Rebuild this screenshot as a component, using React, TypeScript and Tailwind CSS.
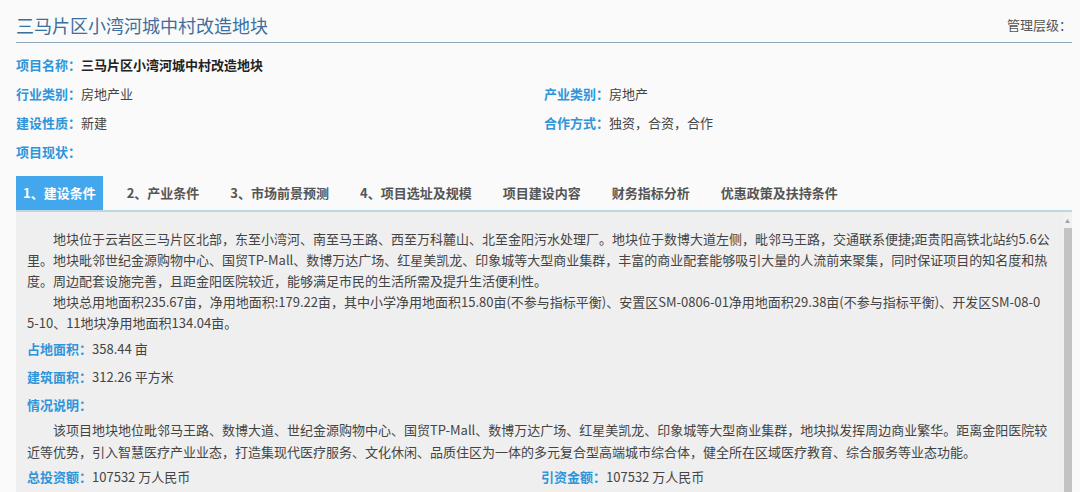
import React from 'react';

const font = { fontFamily: '"Noto Sans CJK SC", "Noto Sans", sans-serif' };

const tabs = [
  '1、建设条件',
  '2、产业条件',
  '3、市场前景预测',
  '4、项目选址及规模',
  '项目建设内容',
  '财务指标分析',
  '优惠政策及扶持条件',
];

const para1 = [
  '　　地块位于云岩区三马片区北部，东至小湾河、南至马王路、西至万科麓山、北至金阳污水处理厂。地块位于数博大道左侧，毗邻马王路，交通联系便捷;距贵阳高铁北站约5.6公',
  '里。地块毗邻世纪金源购物中心、国贸TP-Mall、数博万达广场、红星美凯龙、印象城等大型商业集群，丰富的商业配套能够吸引大量的人流前来聚集，同时保证项目的知名度和热',
  '度。周边配套设施完善，且距金阳医院较近，能够满足市民的生活所需及提升生活便利性。',
  '　　地块总用地面积235.67亩，净用地面积:179.22亩，其中小学净用地面积15.80亩(不参与指标平衡)、安置区SM-0806-01净用地面积29.38亩(不参与指标平衡)、开发区SM-08-0',
  '5-10、11地块净用地面积134.04亩。',
];

const para2 = [
  '　　该项目地块地位毗邻马王路、数博大道、世纪金源购物中心、国贸TP-Mall、数博万达广场、红星美凯龙、印象城等大型商业集群，地块拟发挥周边商业繁华。距离金阳医院较',
  '近等优势，引入智慧医疗产业业态，打造集现代医疗服务、文化休闲、品质住区为一体的多元复合型高端城市综合体，健全所在区域医疗教育、综合服务等业态功能。',
];

function Field({ label, value, strong }: { label: string; value?: string; strong?: boolean }) {
  return (
    <div className="flex items-center h-[29px] text-[13px] whitespace-nowrap">
      <span className="font-semibold text-[#2f95da]">{label}：</span>
      <span className={strong ? 'font-bold text-[#222]' : 'text-[#444]'}>{value}</span>
    </div>
  );
}

function PanelField({ label, value }: { label: string; value?: string }) {
  return (
    <div className="flex items-center h-[28px] text-[13px] whitespace-nowrap">
      <span className="font-semibold text-[#2f95da]">{label}：</span>
      <span className="text-[#444]">{value}</span>
    </div>
  );
}

export default function App() {
  return (
    <div className="w-[1080px] h-[492px] overflow-hidden bg-[#fafafa]" style={font}>
      <div className="ml-[16px] w-[1056px]">
        <div className="flex items-end justify-between h-[43px] pb-[5px] border-b border-[#8fa9bb]">
          <h1 className="text-[18px] leading-[24px] text-[#3d6f9e]">三马片区小湾河城中村改造地块</h1>
          <span className="text-[13px] leading-[24px] text-[#555]">管理层级：</span>
        </div>

        <div className="pt-[7px]">
          <Field label="项目名称" value="三马片区小湾河城中村改造地块" strong />
          <div className="grid grid-cols-2">
            <Field label="行业类别" value="房地产业" />
            <Field label="产业类别" value="房地产" />
            <Field label="建设性质" value="新建" />
            <Field label="合作方式" value="独资，合资，合作" />
          </div>
          <Field label="项目现状" />
        </div>

        <div className="mt-[10px] flex gap-[17px] border-b-2 border-[#bcd6e3]">
          {tabs.map((t, i) => (
            <div
              key={t}
              className={
                i === 0
                  ? 'h-[34px] px-[7px] flex items-center text-[13px] font-bold text-white bg-[#42a7ec]'
                  : 'h-[34px] px-[7px] flex items-center text-[13px] font-semibold text-[#555]'
              }
            >
              {t}
            </div>
          ))}
        </div>

        <div className="flex bg-[#efefef]">
          <div className="flex-1 pl-[11px] pr-[8px] pt-[16px] pb-[20px] text-[13px] text-[#444]">
            {para1.map((l) => (
              <div key={l} className="leading-[21px] whitespace-nowrap">{l}</div>
            ))}
            <div className="mt-[2px]">
              <PanelField label="占地面积" value="358.44 亩" />
              <PanelField label="建筑面积" value="312.26 平方米" />
              <PanelField label="情况说明" />
            </div>
            {para2.map((l) => (
              <div key={l} className="leading-[22px] whitespace-nowrap">{l}</div>
            ))}
            <div className="grid grid-cols-2">
              <PanelField label="总投资额" value="107532 万人民币" />
              <PanelField label="引资金额" value="107532 万人民币" />
            </div>
            <div className="h-[40px]" />
          </div>
          <div className="w-[9px] bg-[#f1f1f1] flex flex-col items-center">
            <svg width="7" height="10" viewBox="0 0 7 10" className="mt-[4px]">
              <path d="M3.5 3 L6 7 L1 7 Z" fill="#a3a3a3" />
            </svg>
            <div className="mt-[2px] w-[8px] flex-1 bg-[#c3c3c3]" />
          </div>
        </div>
      </div>
    </div>
  );
}
